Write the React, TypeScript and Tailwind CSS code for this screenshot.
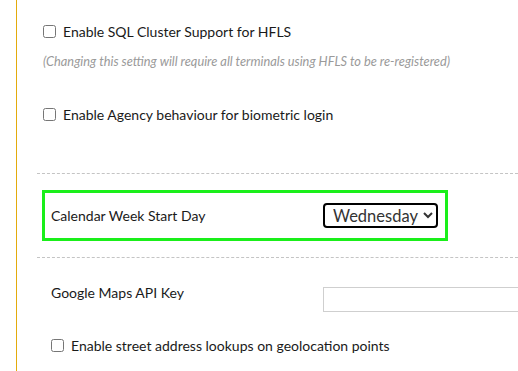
import React from "react";

const font = { fontFamily: "Lato, 'Open Sans', sans-serif" };

function CheckRow({ label, className = "" }: { label: string; className?: string }) {
  return (
    <label className={`flex items-center h-5 text-[14px] text-[#1a1a1a] ${className}`}>
      <input type="checkbox" className="w-[13px] h-[13px] m-0 mr-[7px]" />
      <span>{label}</span>
    </label>
  );
}

export default function App() {
  return (
    <div className="w-[518px] h-[371px] bg-white overflow-hidden font-['Lato',sans-serif]" style={font}>
      <div className="ml-4 h-full border-l border-[#e3ab0c]">
        {/* HFLS settings */}
        <div className="pl-[26px] pt-[21px]">
          <CheckRow label="Enable SQL Cluster Support for HFLS" />
          <p className="mt-[12px] text-[12.8px] italic text-[#9a9a9a] leading-4">
            (Changing this setting will require all terminals using HFLS to be re-registered)
          </p>
          <CheckRow label="Enable Agency behaviour for biometric login" className="mt-[35px]" />
        </div>

        <div className="ml-5 mt-[49px] border-t border-dashed border-[#c4c4c4]" />

        {/* Calendar */}
        <div className="ml-[25px] mt-4 w-[406px] h-[51px] border-[3px] border-[#1aef1a] flex items-center pl-[6px]">
          <span className="text-[14px] text-[#1a1a1a] w-[272px] shrink-0">Calendar Week Start Day</span>
          <select
            defaultValue="Wednesday"
            className="h-[25px] w-[115px] shrink-0 border-2 border-black rounded-[4px] text-[16.5px] text-[#333] pl-[4px] pr-0"
          >
            <option>Sunday</option>
            <option>Monday</option>
            <option>Tuesday</option>
            <option>Wednesday</option>
            <option>Thursday</option>
            <option>Friday</option>
            <option>Saturday</option>
          </select>
        </div>

        <div className="ml-5 mt-4 border-t border-dashed border-[#c4c4c4]" />

        {/* Google Maps */}
        <div className="pl-[34px] mt-[25px] flex items-start">
          <span className="text-[14px] text-[#1a1a1a] leading-5 w-[272px] shrink-0">Google Maps API Key</span>
          <input type="text" className="mt-1 h-[25px] w-[230px] border border-[#cfcfcf] shrink-0" />
        </div>
        <div className="pl-[34px] mt-[23px]">
          <CheckRow label="Enable street address lookups on geolocation points" />
        </div>
      </div>
    </div>
  );
}
